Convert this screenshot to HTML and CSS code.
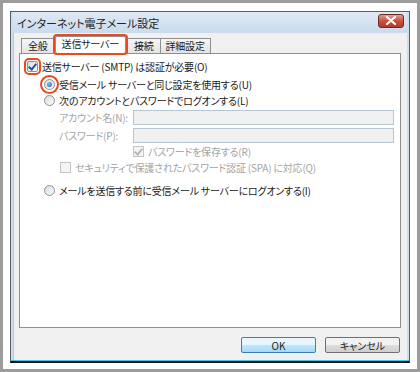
FILE: index.html
```html
<!DOCTYPE html>
<html lang="ja">
<head>
    <meta charset="UTF-8">
    <title>インターネット電子メール設定</title>
    <link rel="stylesheet" href="styles.css">
</head>
<body>
    <div class="window">
        <div class="titlebar">
            <span class="title">インターネット電子メール設定</span>
            <span class="close-btn">
                <svg width="12" height="9" viewBox="0 0 12 9"><path d="M2 1 L10 8 M10 1 L2 8" stroke="#fff" stroke-width="2.2" stroke-linecap="round"/></svg>
            </span>
        </div>
        <div class="client">
            <div class="tabs">
                <div class="tab">全般</div>
                <div class="tab active">送信サーバー</div>
                <div class="tab">接続</div>
                <div class="tab">詳細設定</div>
            </div>
            <div class="panel">
                <div class="row row-auth">
                    <span class="check checked mark"></span>
                    <span>送信サーバー (SMTP) は認証が必要(O)</span>
                </div>
                <div class="row row-same">
                    <span class="radio selected mark"></span>
                    <span>受信メール サーバーと同じ設定を使用する(U)</span>
                </div>
                <div class="row row-logon">
                    <span class="radio"></span>
                    <span>次のアカウントとパスワードでログオンする(L)</span>
                </div>
                <div class="row field disabled">
                    <span class="label">アカウント名(N):</span>
                    <span class="input"></span>
                </div>
                <div class="row field field-pass disabled">
                    <span class="label">パスワード(P):</span>
                    <span class="input"></span>
                </div>
                <div class="row row-save disabled">
                    <span class="check checked"></span>
                    <span>パスワードを保存する(R)</span>
                </div>
                <div class="row row-spa disabled">
                    <span class="check"></span>
                    <span>セキュリティで保護されたパスワード認証 (SPA) に対応(Q)</span>
                </div>
                <div class="row row-before">
                    <span class="radio"></span>
                    <span>メールを送信する前に受信メール サーバーにログオンする(I)</span>
                </div>
            </div>
            <div class="buttons">
                <button class="btn default">OK</button>
                <button class="btn">キャンセル</button>
            </div>
        </div>
    </div>
</body>
</html>
```

FILE: styles.css
```css
* { box-sizing: border-box; }
html, body { margin: 0; }
body {
    width: 420px;
    height: 372px;
    border: 3px solid #9c9c9c;
    background: #fff;
    padding: 8px 0 0 7px;
    font-family: "Noto Sans CJK JP", "Noto Sans", sans-serif;
    font-size: 10px;
    letter-spacing: -0.2px;
    font-feature-settings: "palt";
    color: #1a1a1a;
    white-space: nowrap;
}

.window {
    width: 400px;
    height: 352px;
    border: 1px solid #555e68;
    border-bottom: 2px solid #111;
    background: #cfdeee;
    padding: 0 2px 0 2px;
    display: flex;
    flex-direction: column;
    box-shadow: inset 0 -1px 0 #3ec6e8;
}

.titlebar {
    height: 21px;
    display: flex;
    align-items: center;
    justify-content: space-between;
    padding: 0 3px 0 4px;
    background: linear-gradient(#dfe9f4, #c9dbed);
}
.title { font-size: 11px; letter-spacing: 0; color: #222; }
.close-btn {
    width: 26px;
    height: 14px;
    margin-top: -4px;
    border: 1px solid #6e2a25;
    border-radius: 3px;
    background: linear-gradient(#e2a08f, #c8503d 50%, #b63a28);
    display: flex;
    align-items: center;
    justify-content: center;
}

.client {
    flex: 1;
    background: #f0f0f0;
    border-left: 1px solid #b9c9d9;
    padding: 4px 6px 0 5px;
    margin-bottom: 1px;
}

.tabs { display: flex; align-items: flex-end; height: 16px; padding-left: 2px; }
.tab {
    height: 15px;
    padding: 0 6px;
    border: 1px solid #8e8f8f;
    border-bottom: none;
    background: linear-gradient(#f6f6f6, #e3e3e3);
    line-height: 13px;
    margin-right: -1px;
}
.tab:last-child { padding: 0 5px; }
.tab.active {
    height: 17px;
    background: #fff;
    padding: 0 6px;
    margin: 0 1px;
    position: relative;
    z-index: 1;
    outline: 2px solid #ea4a1c;
    outline-offset: 0;
    border-radius: 2px;
}

.panel {
    height: 275px;
    background: #fff;
    border: 1px solid #8e8f8f;
    padding: 4px 0 0 7px;
}

.row { display: flex; align-items: center; height: 16px; gap: 4px; }
.row-auth { height: 17px; }
.row-same, .row-logon { margin-left: 17px; height: 15px; }
.row-same { margin-top: 2px; }
.row-logon { margin-top: 1px; }
.field { margin-left: 32px; height: 16px; margin-top: 1px; gap: 0; }
.field .label { width: 74px; }
.field-pass { margin-top: 2px; }
.row-save { margin-left: 106px; margin-top: 0; }
.row-spa { margin-left: 33px; }
.row-before { margin-left: 17px; margin-top: 7px; }

.disabled { color: #a3a3a3; }

.input {
    width: 261px;
    height: 15px;
    border: 1px solid #b5c6d6;
    background: #f0f0f0;
}

.check, .radio {
    width: 11px;
    height: 11px;
    flex: none;
    position: relative;
    border: 1px solid #8e8f8f;
    background: linear-gradient(135deg, #dcdcdc, #fbfbfb);
}
.radio { border-radius: 50%; }
.disabled .check { border-color: #c4c4c4; background: #f4f4f4; }
.check.checked::after {
    content: "";
    position: absolute;
    left: 2px;
    top: 0px;
    width: 3px;
    height: 6px;
    border: solid #2a4f9c;
    border-width: 0 2px 2px 0;
    transform: rotate(40deg);
}
.disabled .check.checked::after { border-color: #b8b8b8; }
.radio.selected::after {
    content: "";
    position: absolute;
    left: 2px;
    top: 2px;
    width: 5px;
    height: 5px;
    border-radius: 50%;
    background: radial-gradient(circle at 40% 35%, #7ec3f3, #1d5fb0);
}

/* red annotation boxes */
.mark { outline: 2px solid #ea4a1c; outline-offset: 1px; border-radius: 2px; }
.radio.mark { outline-offset: 2px; border-radius: 50%; }

.buttons { display: flex; justify-content: flex-end; gap: 9px; padding: 9px 1px 0 0; }
.btn {
    width: 75px;
    height: 16px;
    font-family: inherit;
    font-size: 10px;
    font-feature-settings: "palt";
    line-height: 13px;
    padding: 0;
    color: #222;
    border: 1px solid #707070;
    border-radius: 2px;
    background: linear-gradient(#f2f2f2 50%, #dddddd 50%, #cfcfcf);
}
.btn.default {
    border-color: #3c7fb1;
    background: linear-gradient(#eaf6fd 50%, #bee6fd 50%, #a7d9f5);
}
```
